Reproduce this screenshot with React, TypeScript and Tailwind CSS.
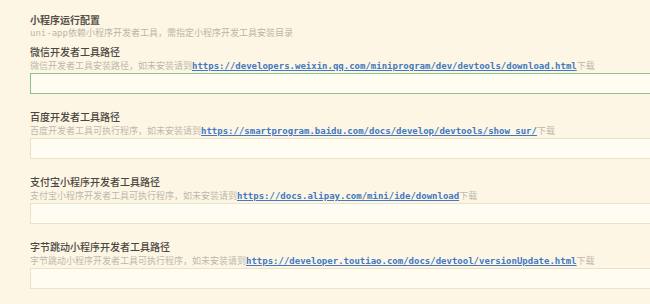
const sections = [
  {
    label: '微信开发者工具路径',
    desc: '微信开发者工具安装路径，如未安装请到',
    url: 'https://developers.weixin.qq.com/miniprogram/dev/devtools/download.html',
    focused: true,
  },
  {
    label: '百度开发者工具路径',
    desc: '百度开发者工具可执行程序，如未安装请到',
    url: 'https://smartprogram.baidu.com/docs/develop/devtools/show_sur/',
  },
  {
    label: '支付宝小程序开发者工具路径',
    desc: '支付宝小程序开发者工具可执行程序，如未安装请到',
    url: 'https://docs.alipay.com/mini/ide/download',
  },
  {
    label: '字节跳动小程序开发者工具路径',
    desc: '字节跳动小程序开发者工具可执行程序，如未安装请到',
    url: 'https://developer.toutiao.com/docs/devtool/versionUpdate.html',
  },
];

const cjk = "font-['Noto_Sans_CJK_SC','Noto_Sans',sans-serif]";
const mono = "font-['DejaVu_Sans_Mono','Noto_Sans_CJK_SC',monospace]";

export default function App() {
  return (
    <div className={`w-[650px] h-[304px] overflow-hidden bg-[#fdf6e4] pl-[30px] pt-[13px] ${cjk}`}>
      {/* header */}
      <div className="text-[10px] leading-[14px] font-bold text-[#555049]">小程序运行配置</div>
      <div className="text-[9px] leading-[12px] text-[#bab5aa]">
        <span className={mono}>uni-app</span>依赖小程序开发者工具，需指定小程序开发工具安装目录
      </div>

      <div className="mt-[6px] flex flex-col gap-[16px]">
        {sections.map((s) => (
          <div key={s.label} className="flex flex-col">
            <div className="text-[10px] leading-[14px] font-medium text-[#4a463f]">{s.label}</div>
            <div className="text-[9px] leading-[14px] text-[#bdb8ad] whitespace-nowrap">
              {s.desc}
              <span className={`${mono} font-bold text-[#4279c2] underline underline-offset-[1px]`}>{s.url}</span>
              下载
            </div>
            <div
              className={`w-[660px] h-[21px] bg-[#fffcf2] border ${
                s.focused ? 'border-[#8cc48c]' : 'border-[#ebe2c9]'
              }`}
            ></div>
          </div>
        ))}
      </div>
    </div>
  );
}
